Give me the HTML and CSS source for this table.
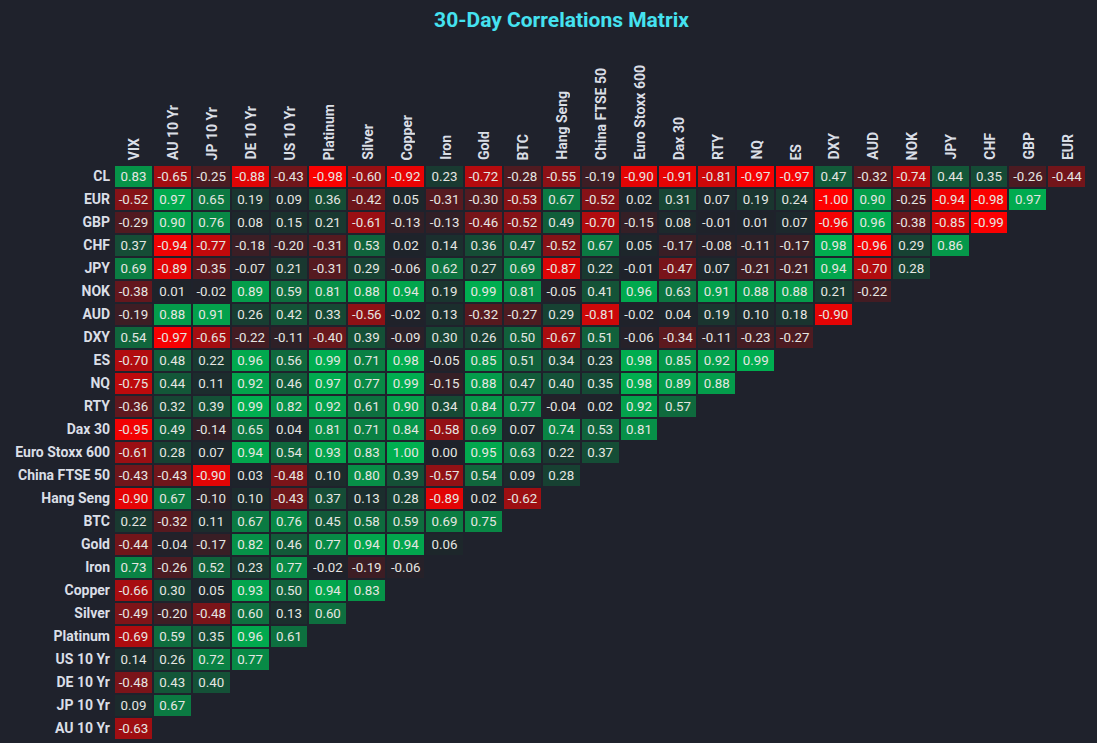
FILE: index.html
```html
<!DOCTYPE html>
<html lang="en">
<head>
<meta charset="utf-8">
<title>30-Day Correlations Matrix</title>
<link rel="stylesheet" href="styles.css">
</head>
<body>
<main class="page">
  <h1 class="title">30-Day Correlations Matrix</h1>
  <div class="matrix" id="matrix"></div>
</main>
<script src="script.js"></script>
</body>
</html>
```

FILE: styles.css
```css
* { box-sizing: border-box; }
html, body {
  margin: 0;
  padding: 0;
  background: #1f222c;
}
body {
  width: 1097px;
  height: 743px;
  overflow: hidden;
  font-family: Roboto, "Liberation Sans", sans-serif;
  color: #e4e4e4;
}
.page {
  display: flex;
  flex-direction: column;
}
.title {
  margin: 0;
  height: 44px;
  padding: 8px 0 0 26px;
  font-size: 21px;
  line-height: 24px;
  font-weight: 700;
  text-align: center;
  color: #45e2f0;
}
.matrix {
  display: grid;
  grid-template-columns: 113px repeat(25, 36.9px);
  grid-template-rows: 120px repeat(25, 21px);
  column-gap: 2px;
  row-gap: 2px;
}
.col-head {
  display: flex;
  justify-content: center;
  align-items: flex-end;
  padding-bottom: 4px;
  padding-left: 2px;
}
.col-head span {
  writing-mode: vertical-rl;
  transform: rotate(180deg);
  font-size: 14px;
  font-weight: 700;
  line-height: 16px;
  color: #dadee6;
  white-space: nowrap;
}
.row-head {
  text-align: right;
  padding-right: 3px;
  font-size: 14px;
  font-weight: 700;
  line-height: 21px;
  color: #dadee6;
  white-space: nowrap;
}
.cell {
  text-align: center;
  font-size: 13.3px;
  line-height: 21px;
  color: #e6e6e2;
}
```

FILE: script.js
```js
(function () {
  var cols = ["VIX", "AU 10 Yr", "JP 10 Yr", "DE 10 Yr", "US 10 Yr", "Platinum", "Silver", "Copper", "Iron", "Gold", "BTC", "Hang Seng", "China FTSE 50", "Euro Stoxx 600", "Dax 30", "RTY", "NQ", "ES", "DXY", "AUD", "NOK", "JPY", "CHF", "GBP", "EUR"];
  var rows = [
    ["CL", "0.83 -0.65 -0.25 -0.88 -0.43 -0.98 -0.60 -0.92 0.23 -0.72 -0.28 -0.55 -0.19 -0.90 -0.91 -0.81 -0.97 -0.97 0.47 -0.32 -0.74 0.44 0.35 -0.26 -0.44"],
    ["EUR", "-0.52 0.97 0.65 0.19 0.09 0.36 -0.42 0.05 -0.31 -0.30 -0.53 0.67 -0.52 0.02 0.31 0.07 0.19 0.24 -1.00 0.90 -0.25 -0.94 -0.98 0.97"],
    ["GBP", "-0.29 0.90 0.76 0.08 0.15 0.21 -0.61 -0.13 -0.13 -0.46 -0.52 0.49 -0.70 -0.15 0.08 -0.01 0.01 0.07 -0.96 0.96 -0.38 -0.85 -0.99"],
    ["CHF", "0.37 -0.94 -0.77 -0.18 -0.20 -0.31 0.53 0.02 0.14 0.36 0.47 -0.52 0.67 0.05 -0.17 -0.08 -0.11 -0.17 0.98 -0.96 0.29 0.86"],
    ["JPY", "0.69 -0.89 -0.35 -0.07 0.21 -0.31 0.29 -0.06 0.62 0.27 0.69 -0.87 0.22 -0.01 -0.47 0.07 -0.21 -0.21 0.94 -0.70 0.28"],
    ["NOK", "-0.38 0.01 -0.02 0.89 0.59 0.81 0.88 0.94 0.19 0.99 0.81 -0.05 0.41 0.96 0.63 0.91 0.88 0.88 0.21 -0.22"],
    ["AUD", "-0.19 0.88 0.91 0.26 0.42 0.33 -0.56 -0.02 0.13 -0.32 -0.27 0.29 -0.81 -0.02 0.04 0.19 0.10 0.18 -0.90"],
    ["DXY", "0.54 -0.97 -0.65 -0.22 -0.11 -0.40 0.39 -0.09 0.30 0.26 0.50 -0.67 0.51 -0.06 -0.34 -0.11 -0.23 -0.27"],
    ["ES", "-0.70 0.48 0.22 0.96 0.56 0.99 0.71 0.98 -0.05 0.85 0.51 0.34 0.23 0.98 0.85 0.92 0.99"],
    ["NQ", "-0.75 0.44 0.11 0.92 0.46 0.97 0.77 0.99 -0.15 0.88 0.47 0.40 0.35 0.98 0.89 0.88"],
    ["RTY", "-0.36 0.32 0.39 0.99 0.82 0.92 0.61 0.90 0.34 0.84 0.77 -0.04 0.02 0.92 0.57"],
    ["Dax 30", "-0.95 0.49 -0.14 0.65 0.04 0.81 0.71 0.84 -0.58 0.69 0.07 0.74 0.53 0.81"],
    ["Euro Stoxx 600", "-0.61 0.28 0.07 0.94 0.54 0.93 0.83 1.00 0.00 0.95 0.63 0.22 0.37"],
    ["China FTSE 50", "-0.43 -0.43 -0.90 0.03 -0.48 0.10 0.80 0.39 -0.57 0.54 0.09 0.28"],
    ["Hang Seng", "-0.90 0.67 -0.10 0.10 -0.43 0.37 0.13 0.28 -0.89 0.02 -0.62"],
    ["BTC", "0.22 -0.32 0.11 0.67 0.76 0.45 0.58 0.59 0.69 0.75"],
    ["Gold", "-0.44 -0.04 -0.17 0.82 0.46 0.77 0.94 0.94 0.06"],
    ["Iron", "0.73 -0.26 0.52 0.23 0.77 -0.02 -0.19 -0.06"],
    ["Copper", "-0.66 0.30 0.05 0.93 0.50 0.94 0.83"],
    ["Silver", "-0.49 -0.20 -0.48 0.60 0.13 0.60"],
    ["Platinum", "-0.69 0.59 0.35 0.96 0.61"],
    ["US 10 Yr", "0.14 0.26 0.72 0.77"],
    ["DE 10 Yr", "-0.48 0.43 0.40"],
    ["JP 10 Yr", "0.09 0.67"],
    ["AU 10 Yr", "-0.63"]
  ];

  var base = [30, 34, 42];
  var red = [255, 0, 0];
  var green = [0, 176, 80];

  function colour(v) {
    var t = Math.pow(Math.min(1, Math.abs(v)), 1.2);
    var target = v < 0 ? red : green;
    var c = [0, 1, 2].map(function (i) {
      return Math.round(base[i] + (target[i] - base[i]) * t);
    });
    return "rgb(" + c.join(",") + ")";
  }

  function el(cls, text) {
    var d = document.createElement("div");
    d.className = cls;
    if (text !== undefined) d.textContent = text;
    return d;
  }

  var grid = document.getElementById("matrix");
  grid.appendChild(el("corner"));
  cols.forEach(function (c) {
    var h = el("col-head");
    var s = document.createElement("span");
    s.textContent = c;
    h.appendChild(s);
    grid.appendChild(h);
  });

  rows.forEach(function (r) {
    grid.appendChild(el("row-head", r[0]));
    var vals = r[1].split(" ");
    for (var j = 0; j < cols.length; j++) {
      if (j < vals.length) {
        var cell = el("cell", vals[j]);
        cell.style.background = colour(parseFloat(vals[j]));
        grid.appendChild(cell);
      } else {
        grid.appendChild(el("blank"));
      }
    }
  });
})();
```
